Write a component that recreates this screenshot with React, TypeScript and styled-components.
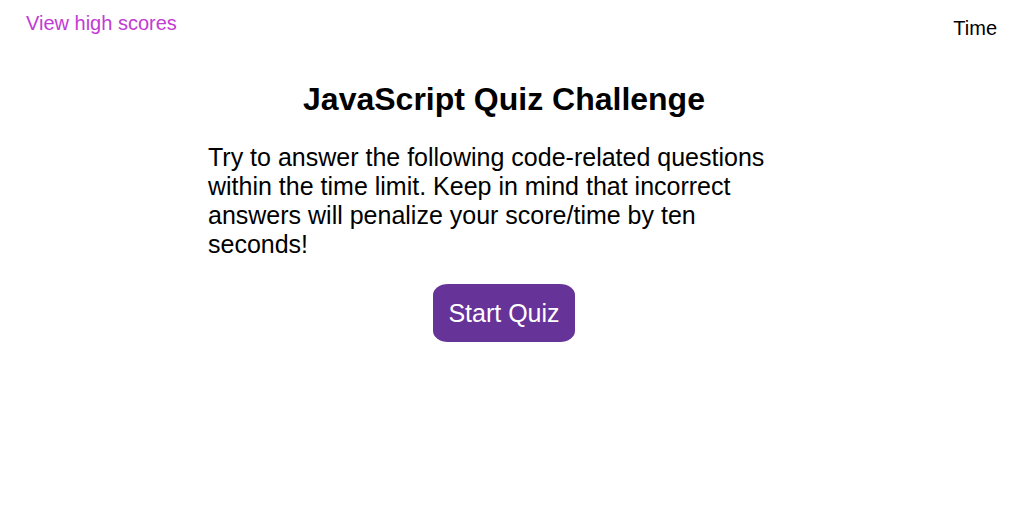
import React from "react";
import styled, { createGlobalStyle } from "styled-components";

const Global = createGlobalStyle`
  html, body { margin: 0; padding: 0; background: #ffffff; }
  body { font-family: "Liberation Sans", Arial, sans-serif; color: #000; }
`;

const Page = styled.div`
  width: 1028px;
  min-height: 531px;
`;

const Header = styled.header`
  display: flex;
  justify-content: space-between;
  align-items: flex-start;
  padding: 12px 31px 0 26px;
`;

const HighScores = styled.a`
  font-size: 20px;
  color: #c23bd3;
  text-decoration: none;
  cursor: pointer;
`;

const Timer = styled.div`
  font-size: 20px;
  margin-top: 5px;
`;

const Main = styled.main`
  display: flex;
  flex-direction: column;
  align-items: center;
  padding-right: 20px;
`;

const Title = styled.h1`
  font-size: 32px;
  font-weight: bold;
  margin: 40px 0 0;
  line-height: 1.2;
`;

const Intro = styled.p`
  width: 592px;
  box-sizing: border-box;
  padding-right: 10px;
  font-size: 25px;
  line-height: 28.7px;
  margin: 25px 0 0;
`;

const StartButton = styled.button`
  margin-top: 26px;
  width: 142px;
  height: 58px;
  background: #663399;
  color: #ffffff;
  border: none;
  border-radius: 15px / 11px;
  font-family: "Liberation Sans", Arial, sans-serif;
  font-size: 25px;
  cursor: pointer;
`;

export default function App() {
  return (
    <Page>
      <Global />
      <Header>
        <HighScores>View high scores</HighScores>
        <Timer>Time</Timer>
      </Header>
      <Main>
        <Title>JavaScript Quiz Challenge</Title>
        <Intro>
          Try to answer the following code-related questions within the time
          limit. Keep in mind that incorrect answers will penalize your
          score/time by ten seconds!
        </Intro>
        <StartButton>Start Quiz</StartButton>
      </Main>
    </Page>
  );
}
